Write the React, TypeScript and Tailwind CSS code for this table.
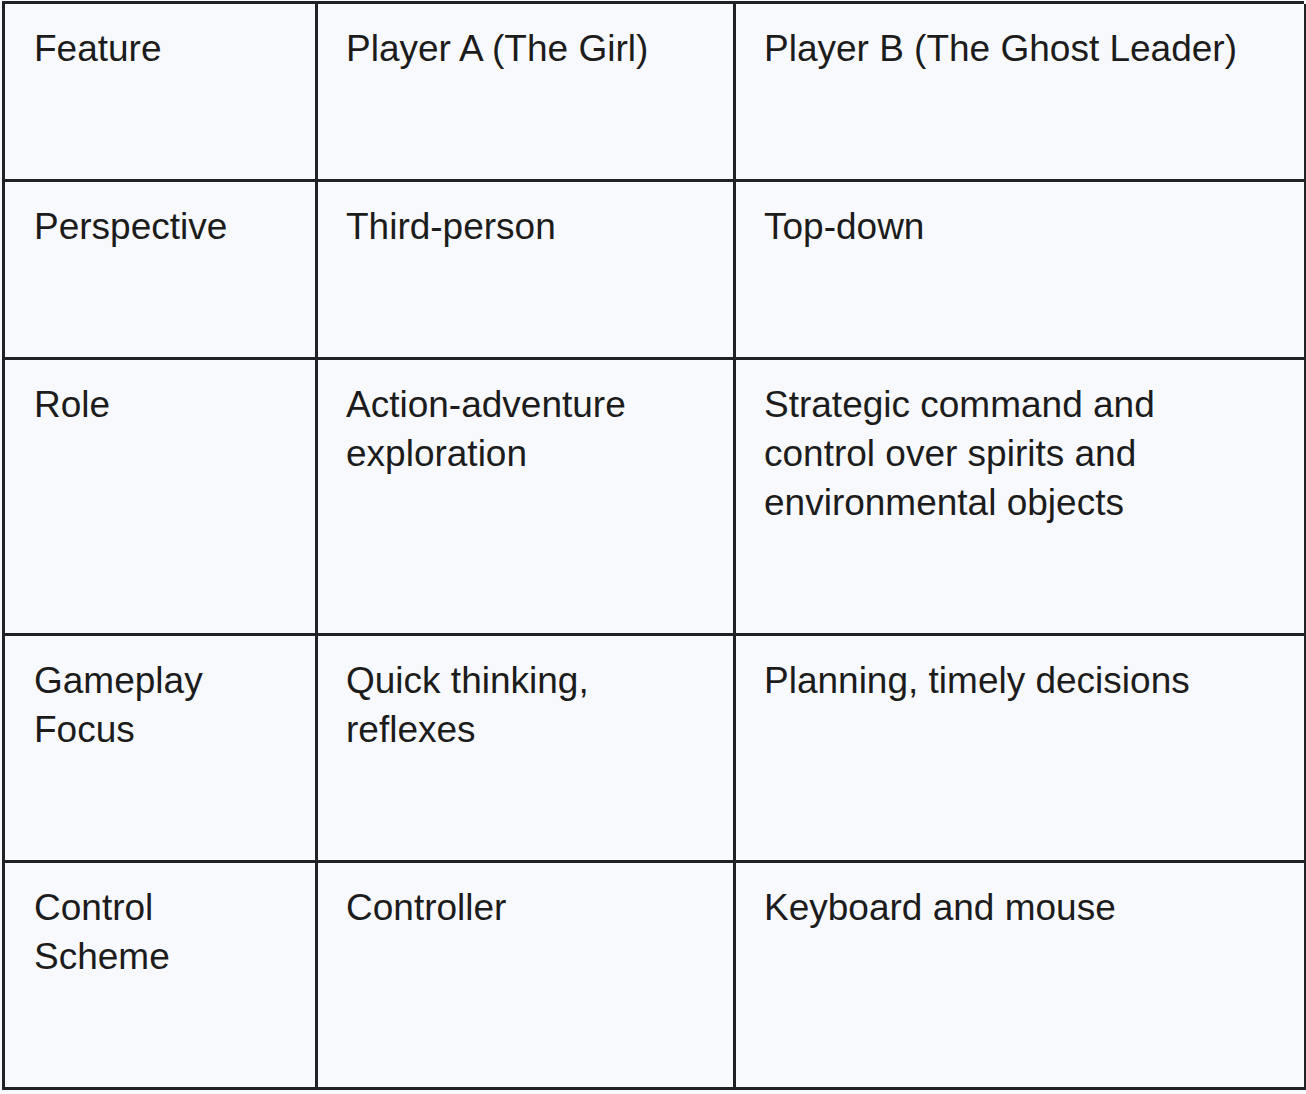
const rows: [string, string, string][] = [
  ['Feature', 'Player A (The Girl)', 'Player B (The Ghost Leader)'],
  ['Perspective', 'Third-person', 'Top-down'],
  [
    'Role',
    'Action-adventure exploration',
    'Strategic command and control over spirits and environmental objects'
  ],
  ['Gameplay Focus', 'Quick thinking, reflexes', 'Planning, timely decisions'],
  ['Control Scheme', 'Controller', 'Keyboard and mouse']
];

export default function App() {
  return (
    <div
      className="min-h-[1094px] w-[1306px] bg-[#f8f9fd] pl-[2px] pt-[1px]"
      style={{ fontFamily: '"Liberation Sans", Arial, sans-serif' }}
    >
      <div className="grid w-[1302px] grid-cols-[313px_418px_571px] border-l-[3px] border-t-[3px] border-[#202124] text-[37px] leading-[49px] text-[#1c1c1c]">
        {rows.map((row, i) =>
          row.map((cell, j) => (
            <div
              key={`${i}-${j}`}
              className={
                j === 0
                  ? 'border-b-[3px] border-r-[3px] border-[#202124] pb-[106px] pl-[29px] pr-[20px] pt-[20px]'
                  : j === 1
                    ? 'border-b-[3px] border-r-[3px] border-[#202124] pb-[106px] pl-[28px] pr-[20px] pt-[20px]'
                    : 'border-b-[3px] border-r-[3px] border-[#202124] pb-[106px] pl-[28px] pr-[50px] pt-[20px]'
              }
            >
              {cell}
            </div>
          ))
        )}
      </div>
    </div>
  );
}
